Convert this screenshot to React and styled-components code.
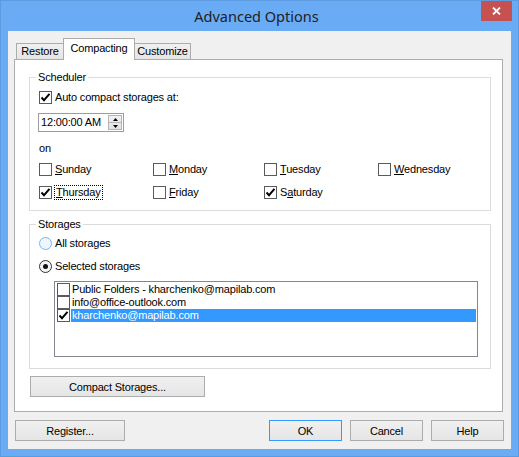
import React from "react";
import styled, { createGlobalStyle } from "styled-components";

const GlobalStyle = createGlobalStyle`
  html, body { margin: 0; padding: 0; }
  body {
    font-family: "Liberation Sans", Arial, sans-serif;
    font-size: 11px;
    line-height: 13px;
    letter-spacing: -0.17px;
    color: #000;
  }
`;

const Window = styled.div`
  width: 519px;
  height: 457px;
  box-sizing: border-box;
  background: #6aabf5;
  border: 1px solid #5d9be0;
  display: flex;
  flex-direction: column;
`;

const TitleBar = styled.div`
  height: 30px;
  flex: none;
  display: grid;
  grid-template-columns: 1fr auto 1fr;
  padding-right: 6px;
`;

const Title = styled.div`
  grid-column: 2;
  align-self: center;
  font-family: "Noto Sans", "Open Sans", sans-serif;
  font-size: 14.5px;
  line-height: 18px;
  letter-spacing: 0;
  color: #1e1e1e;
`;

const CloseButton = styled.div`
  grid-column: 3;
  justify-self: end;
  width: 31px;
  height: 20px;
  background: #c75050;
  display: flex;
  align-items: center;
  justify-content: center;
`;

const Client = styled.div`
  flex: 1;
  margin: 0 7px 7px 7px;
  background: #f0f0f0;
  padding: 7px 8px 8px 6px;
  display: flex;
  flex-direction: column;
  min-height: 0;
`;

const Tabs = styled.div`
  display: flex;
  align-items: flex-end;
  height: 22px;
  margin: 0 0 -1px 2px;
  position: relative;
  z-index: 1;
`;

const Tab = styled.div`
  box-sizing: border-box;
  width: ${(p) => p.$w}px;
  height: ${(p) => (p.$active ? 22 : 17)}px;
  margin-left: ${(p) => (p.$first ? 0 : -1)}px;
  border: 1px solid #acacac;
  border-bottom: ${(p) => (p.$active ? "none" : "1px solid #acacac")};
  background: ${(p) => (p.$active ? "#fff" : "linear-gradient(#f0f0f0, #e5e5e5)")};
  display: flex;
  align-items: center;
  justify-content: center;
  padding-bottom: ${(p) => (p.$active ? 2 : 0)}px;
  position: relative;
  z-index: ${(p) => (p.$active ? 2 : 1)};
`;

const Panel = styled.div`
  flex: 1;
  box-sizing: border-box;
  background: #fff;
  border: 1px solid #acacac;
  padding: 11px 11px 14px 14px;
  display: flex;
  flex-direction: column;
  min-height: 0;
`;

const Group = styled.fieldset`
  margin: ${(p) => p.$top || 0}px 0 0 0;
  border: 1px solid #dcdcdc;
  padding: ${(p) => p.$padTop}px 11px 11px 9px;
  min-width: 0;
  display: flex;
  flex-direction: column;
`;

const Legend = styled.legend`
  padding: 0 2px;
  margin-left: -3px;
  line-height: 13px;
`;

const CheckRow = styled.label`
  display: flex;
  align-items: center;
  height: 13px;
  margin-top: ${(p) => p.$top || 0}px;
  white-space: nowrap;
`;

const Box = styled.span`
  box-sizing: border-box;
  width: 13px;
  height: 13px;
  flex: none;
  border: 1px solid #5a5a5a;
  background: #fff;
  display: flex;
  align-items: center;
  justify-content: center;
`;

const Caption = styled.span`
  padding: 0 1px;
  outline: ${(p) => (p.$focus ? "1px dotted #000" : "none")};
  outline-offset: 0;
  margin-left: ${(p) => (p.$focus ? 3 : 2)}px;
`;

const Radio = styled.span`
  box-sizing: border-box;
  width: 13px;
  height: 13px;
  flex: none;
  border-radius: 50%;
  border: 1px solid ${(p) => (p.$on ? "#333" : "#7eb4ea")};
  background: ${(p) => (p.$on ? "#f4f4f4" : "#eef6fd")};
  display: flex;
  align-items: center;
  justify-content: center;
`;

const Dot = styled.span`
  width: 5px;
  height: 5px;
  border-radius: 50%;
  background: #111;
`;

const TimeBox = styled.div`
  box-sizing: border-box;
  width: 86px;
  height: 19px;
  margin: 9px 0 0 -1px;
  border: 1px solid #9c9c9c;
  background: #fff;
  display: flex;
  align-items: center;
  justify-content: space-between;
  padding: 0 1px 0 2px;
`;

const Spin = styled.div`
  box-sizing: border-box;
  width: 14px;
  height: 15px;
  border: 1px solid #b4b4b4;
  background: linear-gradient(#f2f2f2, #e2e2e2);
  display: flex;
  flex-direction: column;
`;

const SpinHalf = styled.div`
  flex: 1;
  display: flex;
  align-items: center;
  justify-content: center;
  border-top: ${(p) => (p.$lower ? "1px solid #b4b4b4" : "none")};
`;

const OnLabel = styled.div`
  margin-top: 10px;
`;

const Days = styled.div`
  display: grid;
  grid-template-columns: 114px 111px 114px auto;
  row-gap: 10px;
  margin-top: 8px;
`;

const ListBox = styled.div`
  box-sizing: border-box;
  width: 424px;
  height: 76px;
  margin: 8px 0 0 15px;
  border: 1px solid #828790;
  background: #fff;
  padding: 1px;
`;

const ListRow = styled.div`
  display: flex;
  height: 13px;
  align-items: center;
`;

const ListBoxCheck = styled(Box)`
  margin-left: 1px;
`;

const ListText = styled.div`
  flex: 1;
  height: 13px;
  margin-left: 1px;
  padding-left: 1px;
  background: ${(p) => (p.$sel ? "#3399ff" : "transparent")};
  color: ${(p) => (p.$sel ? "#fff" : "#000")};
  white-space: nowrap;
`;

const Button = styled.button`
  box-sizing: border-box;
  width: ${(p) => p.$w}px;
  height: 21px;
  padding: 0;
  border: 1px solid ${(p) => (p.$default ? "#3399ff" : "#acacac")};
  background: linear-gradient(#f0f0f0, #e5e5e5);
  font-family: "Liberation Sans", Arial, sans-serif;
  font-size: 11px;
  letter-spacing: -0.17px;
  color: #000;
  flex: none;
`;

const CompactButton = styled(Button)`
  margin: 7px 0 0 1px;
`;

const Footer = styled.div`
  display: flex;
  align-items: center;
  margin: 8px -1px 0 1px;
  gap: 8px;
`;

const Spacer = styled.div`
  flex: 1;
`;

const Check = () => (
  <svg width="11" height="11" viewBox="0 0 11 11">
    <path d="M1.5 5.5 L4 8.2 L9.5 1.8" fill="none" stroke="#000" strokeWidth="1.9" />
  </svg>
);

const CheckBox = ({ on, children, focus, top }) => (
  <CheckRow $top={top}>
    <Box>{on && <Check />}</Box>
    <Caption $focus={focus}>{children}</Caption>
  </CheckRow>
);

const days = [
  { pre: "", key: "S", rest: "unday", on: false },
  { pre: "", key: "M", rest: "onday", on: false },
  { pre: "", key: "T", rest: "uesday", on: false },
  { pre: "", key: "W", rest: "ednesday", on: false },
  { pre: "", key: "T", rest: "hursday", on: true, focus: true },
  { pre: "", key: "F", rest: "riday", on: false },
  { pre: "S", key: "a", rest: "turday", on: true },
];

const storages = [
  { name: "Public Folders - kharchenko@mapilab.com", on: false },
  { name: "info@office-outlook.com", on: false },
  { name: "kharchenko@mapilab.com", on: true, sel: true },
];

export default function App() {
  return (
    <>
      <GlobalStyle />
      <Window>
        <TitleBar>
          <Title>Advanced Options</Title>
          <CloseButton>
            <svg width="9" height="8" viewBox="0 0 9 8">
              <path d="M1 0.5 L8 7.5 M8 0.5 L1 7.5" stroke="#fff" strokeWidth="1.8" />
            </svg>
          </CloseButton>
        </TitleBar>
        <Client>
          <Tabs>
            <Tab $w={48} $first>Restore</Tab>
            <Tab $w={72} $active>Compacting</Tab>
            <Tab $w={57}>Customize</Tab>
          </Tabs>
          <Panel>
            <Group $padTop={7}>
              <Legend>Scheduler</Legend>
              <CheckBox on>Auto compact storages at:</CheckBox>
              <TimeBox>
                <span>12:00:00 AM</span>
                <Spin>
                  <SpinHalf>
                    <svg width="5" height="3" viewBox="0 0 5 3">
                      <path d="M0 3 L2.5 0 L5 3 Z" fill="#000" />
                    </svg>
                  </SpinHalf>
                  <SpinHalf $lower>
                    <svg width="5" height="3" viewBox="0 0 5 3">
                      <path d="M0 0 L2.5 3 L5 0 Z" fill="#000" />
                    </svg>
                  </SpinHalf>
                </Spin>
              </TimeBox>
              <OnLabel>on</OnLabel>
              <Days>
                {days.map((d, i) => (
                  <CheckBox key={i} on={d.on} focus={d.focus}>
                    {d.pre}
                    <u>{d.key}</u>
                    {d.rest}
                  </CheckBox>
                ))}
              </Days>
            </Group>
            <Group $top={7} $padTop={6}>
              <Legend>Storages</Legend>
              <CheckRow>
                <Radio />
                <Caption>All storages</Caption>
              </CheckRow>
              <CheckRow $top={10}>
                <Radio $on>
                  <Dot />
                </Radio>
                <Caption>Selected storages</Caption>
              </CheckRow>
              <ListBox>
                {storages.map((s) => (
                  <ListRow key={s.name}>
                    <ListBoxCheck>{s.on && <Check />}</ListBoxCheck>
                    <ListText $sel={s.sel}>{s.name}</ListText>
                  </ListRow>
                ))}
              </ListBox>
            </Group>
            <CompactButton $w={175}>Compact Storages...</CompactButton>
          </Panel>
          <Footer>
            <Button $w={110}>Register...</Button>
            <Spacer />
            <Button $w={73} $default>OK</Button>
            <Button $w={73}>Cancel</Button>
            <Button $w={73}>Help</Button>
          </Footer>
        </Client>
      </Window>
    </>
  );
}
